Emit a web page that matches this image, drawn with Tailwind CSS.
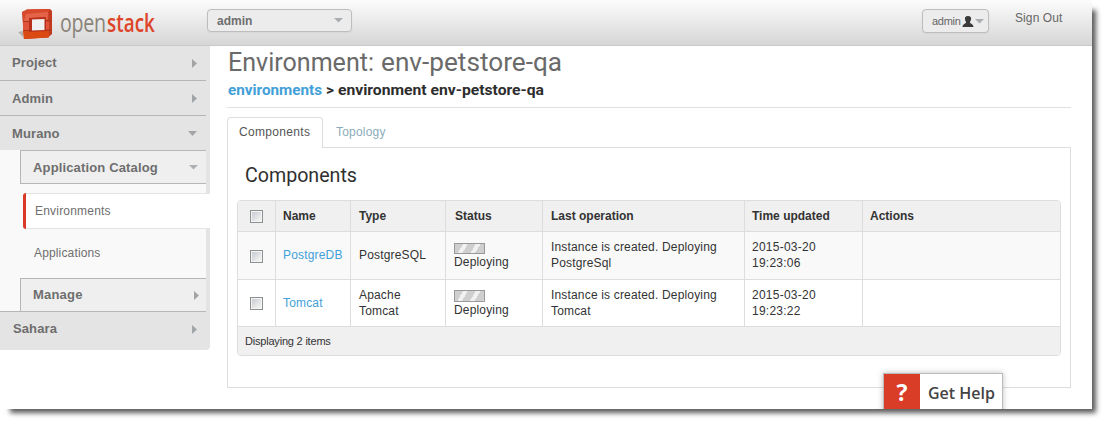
<!DOCTYPE html>
<html lang="en">
<head>
<meta charset="utf-8">
<title>Environment: env-petstore-qa</title>
<script src="https://cdn.jsdelivr.net/npm/@tailwindcss/browser@4"></script>
</head>
<body class="w-[1107px] h-[424px] overflow-hidden bg-white font-['Liberation_Sans',Arial,sans-serif] text-[12px] leading-[16px] text-[#333]">
<div class="w-[1092px] h-[409px] flex flex-col bg-white overflow-visible shadow-[7px_7px_5px_-3px_#5c5c5c]">
  <header class="h-[46px] shrink-0 flex items-start border-b border-[#c8c8c8] bg-linear-to-b from-[#fcfcfc] to-[#d6d6d6]">
    <svg class="ml-[18px] mt-[4px] shrink-0" width="150" height="40" viewBox="0 0 150 40">
      <path d="M0 28L5 27V34L7 35Z" fill="#b5b0ac"/>
      <path d="M4 8L9 5.500L32 5L34 7V30L30 33.500L6 35Z" fill="#c23a1f"/>
      <path d="M4.500 8L9 5.500L32 5L30.500 8V15H12V17H5Z" fill="#d9492c"/>
      <path d="M8 10L30 8L29.500 16L26 16V13L12 14V17L6 17Z" fill="#e4644a"/>
      <path d="M5 18H12V26H5ZM26 17H31V26H26Z" fill="#e0523a"/>
      <path d="M5 27H31V33.500L6 35Z" fill="#dc4a14"/>
      <path d="M11 14L28 13V27L11 28Z" fill="#b8301a"/>
      <path d="M14 15.500L26.500 15V26L14 26.500Z" fill="#f0f0f0"/>
      <path d="M5 17.500H12M28 17H34M5 26.500H12M28 26H34" stroke="#a13419" stroke-width=".8"/>
      <g font-family="Open Sans, sans-serif" font-size="26">
        <text transform="translate(42 28) scale(.755 1)" textLength="61" fill="#8a8378">open</text>
        <text transform="translate(89 28) scale(.725 1)" textLength="66" fill="#de4427" font-weight="600">stack</text>
      </g>
    </svg>
    <div class="ml-[39px] mt-[9px] w-[145px] h-[23px] flex items-center justify-between rounded-[4px] border border-[#bdbdbd] bg-[#ececec] pl-[9px] pr-[8px] text-[12px] font-bold text-[#6e6e6e] shadow-xs">
      <span>admin</span>
      <svg width="9" height="5"><path d="M0 0H9L4.500 4.500Z" fill="#a9adb0"/></svg>
    </div>
    <div class="ml-auto mt-[9px] w-[67px] h-[24px] flex items-center rounded-[4px] border border-[#bdbdbd] bg-[#ececec] pl-[9px] text-[#666] shadow-xs">
      <span class="text-[11px] w-[28px] tracking-[-.3px]">admin</span>
      <svg class="ml-[2px]" width="12" height="11" viewBox="0 0 12 11"><path d="M6 0C8.500 0 9.500 1.500 9 3.500C8.700 5 8 5.500 8 6.500C8 7.600 11.500 8 11.500 11H.5C.5 8 4 7.600 4 6.500C4 5.500 3.300 5 3 3.500C2.500 1.500 3.500 0 6 0Z" fill="#3a3a3a"/></svg>
      <svg class="ml-[1px]" width="9" height="5"><path d="M0 0H9L4.500 4.500Z" fill="#a9adb0"/></svg>
    </div>
    <a class="ml-[26px] mr-[29px] mt-[10px] w-[48px] whitespace-nowrap text-[#666] tracking-[.1px]">Sign Out</a>
  </header>

  <div class="flex flex-1 min-h-0">
    <nav class="w-[210px] h-[304px] shrink-0 flex flex-col rounded-br-[4px] bg-[#e4e4e4] text-[13px] text-[#6e6e6e]">
      <div class="h-[35px] mr-[4px] flex items-center justify-between border-b border-[#b6b6b6] pl-[12px] pr-[9px] font-bold"><span class="tracking-[.1px]">Project</span><svg width="5" height="9"><path d="M0 0V9L5 4.500Z" fill="#a2a5a8"/></svg></div>
      <div class="h-[35px] mr-[4px] flex items-center justify-between border-b border-[#b6b6b6] pl-[12px] pr-[9px] font-bold"><span class="tracking-[.1px] pt-[2px]">Admin</span><svg width="5" height="9"><path d="M0 0V9L5 4.500Z" fill="#a2a5a8"/></svg></div>
      <div class="h-[34px] mr-[4px] flex items-center justify-between pl-[12px] pr-[9px] font-bold"><span class="tracking-[.1px] pt-[2px]">Murano</span><svg width="9" height="5"><path d="M0 0H9L4.500 5Z" fill="#a2a5a8"/></svg></div>
      <div class="h-[161px] w-[206px] flex flex-col bg-[#f9f9f9]">
        <div class="h-[34px] ml-[20px] flex items-center justify-between border border-r-0 border-[#b6b6b6] bg-[#efefef] pl-[12px] pr-[8px] font-bold"><span class="tracking-[.15px] pt-[2px]">Application Catalog</span><svg width="9" height="5"><path d="M0 0H9L4.500 4.500Z" fill="#aeb1b3"/></svg></div>
        <div class="mt-[9px] ml-[23px] -mr-[4px] h-[36px] shrink-0 flex rounded-l-[3px] overflow-hidden bg-white">
          <i class="w-[3px] bg-[#d93a28]"></i>
          <span class="flex-1 flex items-center border-y border-[#e4e4e4] pl-[9px] text-[12px] tracking-[.2px]">Environments</span>
        </div>
        <div class="h-[49px] flex items-center pl-[34px] pb-[2px] text-[12px] tracking-[.15px]">Applications</div>
        <div class="h-[33px] ml-[20px] flex items-center justify-between border-l border-t border-[#b6b6b6] bg-[#efefef] pl-[12px] pr-[7px] font-bold"><span class="tracking-[.2px]">Manage</span><svg width="5" height="9"><path d="M0 0V9L5 4.500Z" fill="#a2a5a8"/></svg></div>
      </div>
      <div class="h-[35px] mr-[4px] flex items-center justify-between border-t border-[#b6b6b6] pl-[13px] pr-[9px] font-bold"><span class="tracking-[.1px]">Sahara</span><svg width="5" height="9"><path d="M0 0V9L5 4.500Z" fill="#a2a5a8"/></svg></div>
    </nav>

    <main class="ml-[17px] w-[844px] flex flex-col">
      <h1><svg class="block" width="844" height="34" font-family="Roboto, sans-serif" font-size="26" fill="#6a6a6a"><text x="1" y="25" textLength="146" lengthAdjust="spacingAndGlyphs">Environment:</text><text x="154" y="25" textLength="181" lengthAdjust="spacingAndGlyphs">env-petstore-qa</text></svg></h1>
      <div class="h-[28px] border-b border-[#e0e0e0]"><svg class="block" width="844" height="26" font-family="Roboto, sans-serif" font-size="15" font-weight="700"><text x="1" y="15" textLength="94" lengthAdjust="spacingAndGlyphs" fill="#439fd8">environments</text><text x="99" y="15" textLength="218" lengthAdjust="spacingAndGlyphs" fill="#2d2d2d">&gt; environment env-petstore-qa</text></svg></div>
      <div class="mt-[9px] h-[31px] shrink-0 flex z-10 -mb-px">
        <div class="w-[96px] flex items-center pl-[11px] pb-[3px] rounded-t-[4px] border border-b-0 border-[#ddd] bg-white text-[#555] tracking-[.33px]">Components</div>
        <div class="flex items-center pl-[13px] pb-[2px] text-[#8bacba] tracking-[.2px]">Topology</div>
      </div>
      <section class="h-[241px] shrink-0 border border-[#ddd] px-[9px]">
        <h2><svg class="block" width="300" height="52"><text x="8" y="34" textLength="112" lengthAdjust="spacingAndGlyphs" font-family="Roboto, sans-serif" font-size="20" fill="#2f2f2f">Components</text></svg></h2>
        <div class="w-[824px] rounded-[4px] overflow-hidden border border-[#ddd] tracking-[.17px]">
          <div class="grid grid-cols-[38px_75px_95px_97px_202px_118px_197px] h-[31px] border-b border-[#ddd] bg-[#f0f0f0] font-bold tracking-normal divide-x divide-[#ddd]">
            <div class="flex items-center pl-[12px]"><i class="size-[13px] border border-[#8e8f8f] bg-linear-to-br from-[#c3c7cc] to-[#fbfbfb] shadow-[inset_0_0_0_1px_#f4f4f4]"></i></div>
            <div class="flex items-center pl-[7px]">Name</div><div class="flex items-center pl-[8px]">Type</div><div class="flex items-center pl-[9px]">Status</div><div class="flex items-center pl-[8px]">Last operation</div><div class="flex items-center pl-[7px]">Time updated</div><div class="flex items-center pl-[7px]">Actions</div>
          </div>
          <div class="grid grid-cols-[38px_75px_95px_97px_202px_118px_197px] h-[48px] border-b border-[#ddd] bg-[#f9f9f9] divide-x divide-[#ddd]">
            <div class="flex items-center pl-[12px] pt-[2px]"><i class="size-[13px] border border-[#8e8f8f] bg-linear-to-br from-[#c3c7cc] to-[#fbfbfb] shadow-[inset_0_0_0_1px_#f4f4f4]"></i></div>
            <div class="flex items-center pl-[7px] pb-[2px] text-[#439fd8]">PostgreDB</div>
            <div class="flex items-center pl-[8px] pb-[2px]">PostgreSQL</div>
            <div class="pl-[8px] pt-[11px]"><i class="block w-[31px] h-[11px] border border-[#999] bg-[repeating-linear-gradient(120deg,#cfcfcf_0_7px,#f1f1f1_7px_11px)]"></i><p>Deploying</p></div>
            <div class="pl-[8px] pt-[7px]">Instance is created. Deploying<br>PostgreSql</div>
            <div class="pl-[7px] pt-[7px] tracking-[.25px]">2015-03-20<br>19:23:06</div>
            <div></div>
          </div>
          <div class="grid grid-cols-[38px_75px_95px_97px_202px_118px_197px] h-[47px] border-b border-[#ddd] bg-white divide-x divide-[#ddd]">
            <div class="flex items-center pl-[12px]"><i class="size-[13px] border border-[#8e8f8f] bg-linear-to-br from-[#c3c7cc] to-[#fbfbfb] shadow-[inset_0_0_0_1px_#f4f4f4]"></i></div>
            <div class="flex items-center pl-[7px] text-[#439fd8]">Tomcat</div>
            <div class="pl-[8px] pt-[7px]">Apache<br>Tomcat</div>
            <div class="pl-[8px] pt-[10px]"><i class="block w-[31px] h-[12px] border border-[#999] bg-[repeating-linear-gradient(120deg,#cfcfcf_0_7px,#f1f1f1_7px_11px)]"></i><p>Deploying</p></div>
            <div class="pl-[8px] pt-[7px]">Instance is created. Deploying<br>Tomcat</div>
            <div class="pl-[7px] pt-[7px] tracking-[.25px]">2015-03-20<br>19:23:22</div>
            <div></div>
          </div>
          <div class="h-[28px] flex items-center bg-[#f0f0f0] pl-[7px] text-[11px] tracking-[-.2px]">Displaying 2 items</div>
        </div>
      </section>
    </main>
  </div>
</div>
<div class="absolute left-[875px] top-[365px] w-[136px] h-[44px] overflow-hidden">
  <div class="ml-[8px] mt-[8px] w-[120px] h-[40px] flex border border-[#bbb] bg-white shadow-[0_0_6px_rgba(0,0,0,.25)] font-['Open_Sans',sans-serif] font-semibold">
    <div class="w-[36px] h-[36px] flex items-center justify-center bg-[#d93c27] text-white text-[23px] font-bold">?</div>
    <div class="pl-[8px] h-[38px] flex items-center text-[16px] text-[#444]">Get Help</div>
  </div>
</div>
</body>
</html>
